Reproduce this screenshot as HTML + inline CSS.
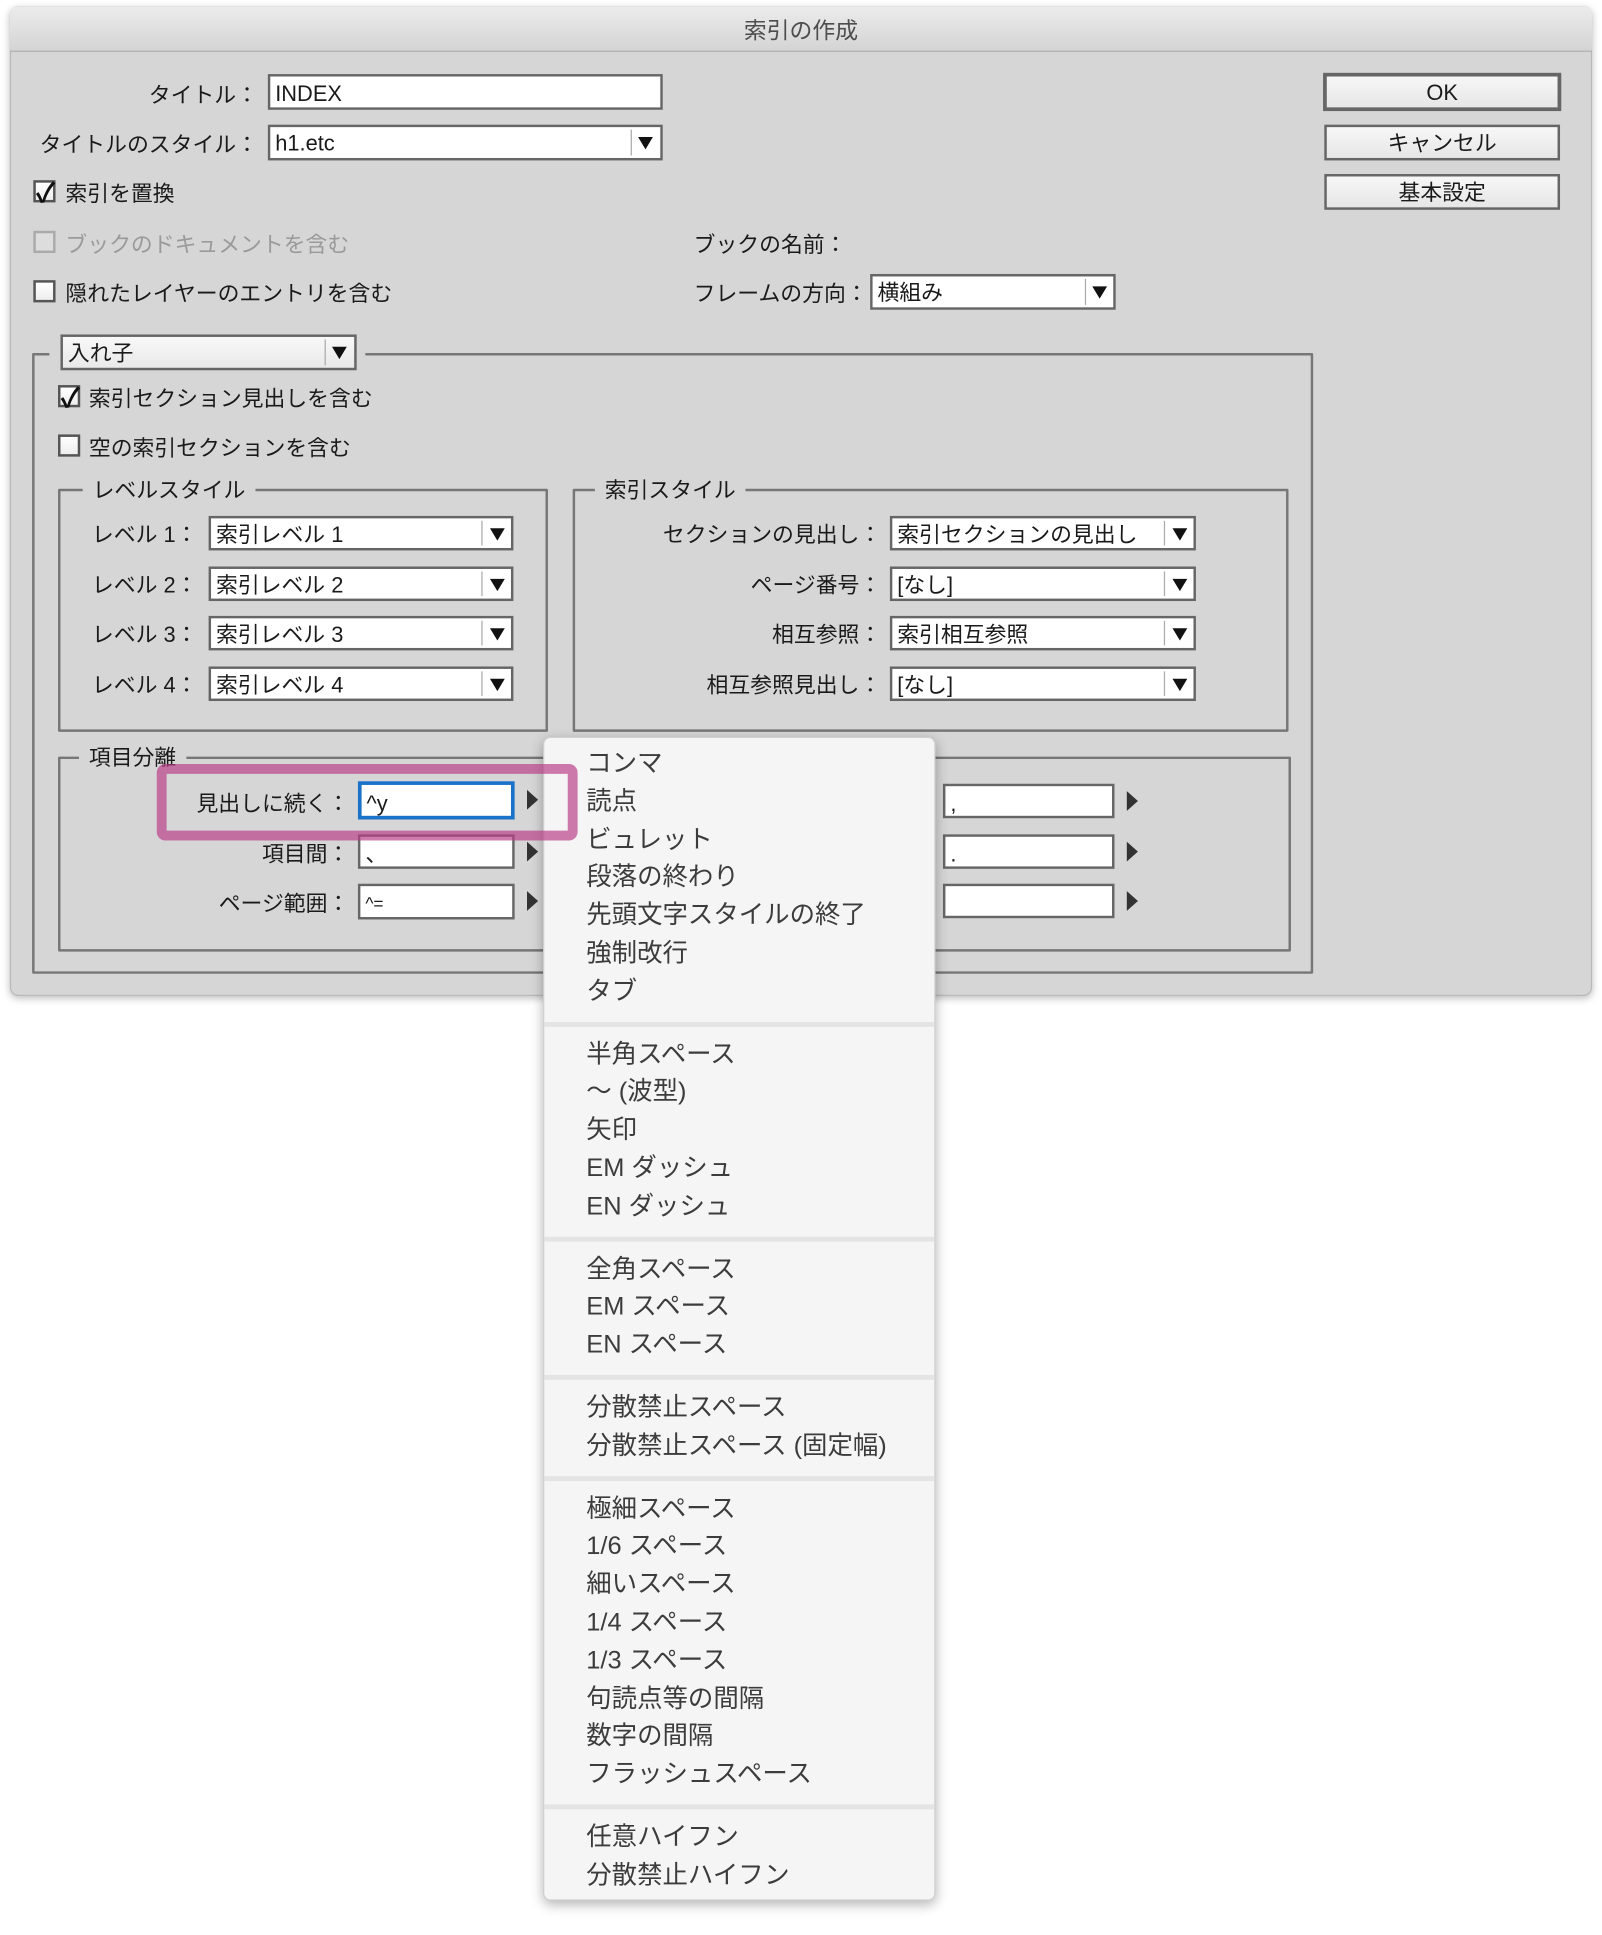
<!DOCTYPE html>
<html><head><meta charset="utf-8">
<style>
*{margin:0;padding:0;box-sizing:border-box}
html,body{width:1602px;height:1935px;background:#fff;overflow:hidden}
#root{position:absolute;left:0;top:0;width:1298px;height:1568px;transform:scale(1.2342);transform-origin:0 0;
font-family:"Liberation Sans","Noto Sans CJK JP",sans-serif;color:#1a1a1a;font-size:17.7px}
.a{position:absolute}
.dlg{left:8px;top:5px;width:1282px;height:802px;background:#d6d6d6;border-radius:7px;border:1px solid #b9b9b9;box-shadow:0 2px 6px rgba(0,0,0,.25)}
.tb{left:8px;top:5px;width:1282px;height:37px;border-radius:7px 7px 0 0;background:linear-gradient(#ececec,#d4d4d4);border-bottom:1px solid #a8a8a8;text-align:center;line-height:39px;color:#4d4d4d;font-size:18.5px}
.lbl{white-space:nowrap;line-height:24px;height:24px;margin-top:2px}
.r{text-align:right}
.inp{background:#fff;border:2px solid #666;line-height:28px;padding-left:4px;white-space:nowrap;font-size:17.7px}
.dd{background:#fff;border:2px solid #666;padding-left:4px;line-height:27px;white-space:nowrap}
.dd .sep{position:absolute;top:2px;bottom:2px;width:1px;background:#aaa}
.dd .tri{position:absolute;width:0;height:0;border-left:6px solid transparent;border-right:6px solid transparent;border-top:10px solid #111;top:8px}
.cb{width:18px;height:18px;border:2px solid #555;background:linear-gradient(#fff,#eee)}
.grp{border:2px solid #777;border-radius:1px}
.leg{background:#d6d6d6;padding:0 8px;line-height:26px;height:24px}
.btn{border:2px solid #666;background:linear-gradient(#f7f7f7,#e6e6e6);text-align:center;line-height:27px;font-size:17.7px}
.arr{width:0;height:0;border-top:8px solid transparent;border-bottom:8px solid transparent;border-left:9px solid #333}
.menu{left:440px;top:597px;width:318px;height:943px;background:#f5f5f5;border-radius:6px;box-shadow:0 3px 10px rgba(0,0,0,.3);border:1px solid #d0d0d0;padding-top:6px}
.mi{height:30.8px;line-height:30.8px;padding-left:34px;font-size:20.6px;color:#3c3c3c;white-space:nowrap}
.ms{height:20px;position:relative}
.ms:after{content:"";position:absolute;left:0;right:0;top:8px;height:4px;background:#e4e4e4}
</style></head><body><div id="root">
<div class="a dlg"></div>
<div class="a tb">索引の作成</div>

<div class="a lbl r" style="left:60px;width:149px;top:63px">タイトル：</div>
<div class="a inp" style="left:217px;top:60px;width:320px;height:29px">INDEX</div>
<div class="a lbl r" style="left:20px;width:189px;top:103px">タイトルのスタイル：</div>
<div class="a dd" style="left:217px;top:101px;width:320px;height:29px">h1.etc<div class="sep" style="left:292px"></div><div class="tri" style="left:298px"></div></div>

<div class="a btn" style="left:1072px;top:59px;width:193px;height:31px;border-width:3px;line-height:27px">OK</div>
<div class="a btn" style="left:1073px;top:101px;width:191px;height:29px">キャンセル</div>
<div class="a btn" style="left:1073px;top:141px;width:191px;height:29px">基本設定</div>

<div class="a cb" style="left:27px;top:146px"></div>
<div class="a" style="left:29px;top:139px;font-size:22px;font-weight:bold;color:#111">✓</div>
<div class="a lbl" style="left:53px;top:143px">索引を置換</div>
<div class="a cb" style="left:27px;top:187px;border-color:#aaa;background:#ddd"></div>
<div class="a lbl" style="left:53px;top:184px;color:#9a9a9a">ブックのドキュメントを含む</div>
<div class="a cb" style="left:27px;top:227px"></div>
<div class="a lbl" style="left:53px;top:224px">隠れたレイヤーのエントリを含む</div>
<div class="a lbl" style="left:562px;top:184px">ブックの名前：</div>
<div class="a lbl" style="left:562px;top:224px">フレームの方向：</div>
<div class="a dd" style="left:705px;top:222px;width:199px;height:29px">横組み<div class="sep" style="left:172px"></div><div class="tri" style="left:178px"></div></div>

<div class="a grp" style="left:26px;top:286px;width:1038px;height:503px"></div>
<div class="a" style="left:40px;top:280px;width:256px;height:14px;background:#d6d6d6"></div>
<div class="a dd" style="left:49px;top:271px;width:240px;height:29px;background:linear-gradient(#f8f8f8,#e9e9e9)">入れ子<div class="sep" style="left:212px"></div><div class="tri" style="left:218px"></div></div>
<div class="a cb" style="left:47px;top:312px"></div>
<div class="a" style="left:49px;top:305px;font-size:22px;font-weight:bold;color:#111">✓</div>
<div class="a lbl" style="left:72px;top:309px">索引セクション見出しを含む</div>
<div class="a cb" style="left:47px;top:352px"></div>
<div class="a lbl" style="left:72px;top:349px">空の索引セクションを含む</div>

<div class="a grp" style="left:47px;top:396px;width:397px;height:197px"></div>
<div class="a leg" style="left:67px;top:384px">レベルスタイル</div>
<div class="a grp" style="left:464px;top:396px;width:580px;height:197px"></div>
<div class="a leg" style="left:482px;top:384px">索引スタイル</div>

<div class="a lbl r" style="left:60px;width:100px;top:419px">レベル 1：</div>
<div class="a dd" style="left:169px;top:418px;width:247px;height:28px">索引レベル 1<div class="sep" style="left:219px"></div><div class="tri" style="left:226px"></div></div>
<div class="a lbl r" style="left:60px;width:100px;top:460px">レベル 2：</div>
<div class="a dd" style="left:169px;top:459px;width:247px;height:28px">索引レベル 2<div class="sep" style="left:219px"></div><div class="tri" style="left:226px"></div></div>
<div class="a lbl r" style="left:60px;width:100px;top:500px">レベル 3：</div>
<div class="a dd" style="left:169px;top:499px;width:247px;height:28px">索引レベル 3<div class="sep" style="left:219px"></div><div class="tri" style="left:226px"></div></div>
<div class="a lbl r" style="left:60px;width:100px;top:541px">レベル 4：</div>
<div class="a dd" style="left:169px;top:540px;width:247px;height:28px">索引レベル 4<div class="sep" style="left:219px"></div><div class="tri" style="left:226px"></div></div>

<div class="a lbl r" style="left:470px;width:244px;top:419px">セクションの見出し：</div>
<div class="a dd" style="left:721px;top:418px;width:248px;height:28px">索引セクションの見出し<div class="sep" style="left:220px"></div><div class="tri" style="left:227px"></div></div>
<div class="a lbl r" style="left:470px;width:244px;top:460px">ページ番号：</div>
<div class="a dd" style="left:721px;top:459px;width:248px;height:28px">[なし]<div class="sep" style="left:220px"></div><div class="tri" style="left:227px"></div></div>
<div class="a lbl r" style="left:470px;width:244px;top:500px">相互参照：</div>
<div class="a dd" style="left:721px;top:499px;width:248px;height:28px">索引相互参照<div class="sep" style="left:220px"></div><div class="tri" style="left:227px"></div></div>
<div class="a lbl r" style="left:470px;width:244px;top:541px">相互参照見出し：</div>
<div class="a dd" style="left:721px;top:540px;width:248px;height:28px">[なし]<div class="sep" style="left:220px"></div><div class="tri" style="left:227px"></div></div>

<div class="a grp" style="left:47px;top:613px;width:999px;height:158px"></div>
<div class="a leg" style="left:64px;top:601px">項目分離</div>
<div class="a lbl r" style="left:110px;width:173px;top:637px">見出しに続く：</div>
<div class="a inp" style="left:290px;top:633px;width:127px;height:31px;border-color:#1a73c9;border-width:3px;line-height:30px">^y</div>
<div class="a arr" style="left:427px;top:640px"></div>
<div class="a lbl r" style="left:110px;width:173px;top:678px">項目間：</div>
<div class="a inp" style="left:290px;top:676px;width:127px;height:28px">、</div>
<div class="a arr" style="left:427px;top:682px"></div>
<div class="a lbl r" style="left:110px;width:173px;top:718px">ページ範囲：</div>
<div class="a inp" style="left:290px;top:716px;width:127px;height:29px;font-size:14px">^=</div>
<div class="a arr" style="left:427px;top:722px"></div>
<div class="a inp" style="left:764px;top:635px;width:139px;height:28px">,</div>
<div class="a arr" style="left:913px;top:641px"></div>
<div class="a inp" style="left:764px;top:676px;width:139px;height:28px">.</div>
<div class="a arr" style="left:913px;top:682px"></div>
<div class="a inp" style="left:764px;top:716px;width:139px;height:28px"></div>
<div class="a arr" style="left:913px;top:722px"></div>

<div class="a menu">
<div class="mi">コンマ</div><div class="mi">読点</div><div class="mi">ビュレット</div><div class="mi">段落の終わり</div><div class="mi">先頭文字スタイルの終了</div><div class="mi">強制改行</div><div class="mi">タブ</div>
<div class="ms"></div>
<div class="mi">半角スペース</div><div class="mi">～ (波型)</div><div class="mi">矢印</div><div class="mi">EM ダッシュ</div><div class="mi">EN ダッシュ</div>
<div class="ms"></div>
<div class="mi">全角スペース</div><div class="mi">EM スペース</div><div class="mi">EN スペース</div>
<div class="ms"></div>
<div class="mi">分散禁止スペース</div><div class="mi">分散禁止スペース (固定幅)</div>
<div class="ms"></div>
<div class="mi">極細スペース</div><div class="mi">1/6 スペース</div><div class="mi">細いスペース</div><div class="mi">1/4 スペース</div><div class="mi">1/3 スペース</div><div class="mi">句読点等の間隔</div><div class="mi">数字の間隔</div><div class="mi">フラッシュスペース</div>
<div class="ms"></div>
<div class="mi">任意ハイフン</div><div class="mi">分散禁止ハイフン</div>
</div>

<div class="a" style="left:127px;top:619px;width:341px;height:62px;border:8px solid rgba(185,60,135,.68);border-radius:7px"></div>
</div></body></html>
